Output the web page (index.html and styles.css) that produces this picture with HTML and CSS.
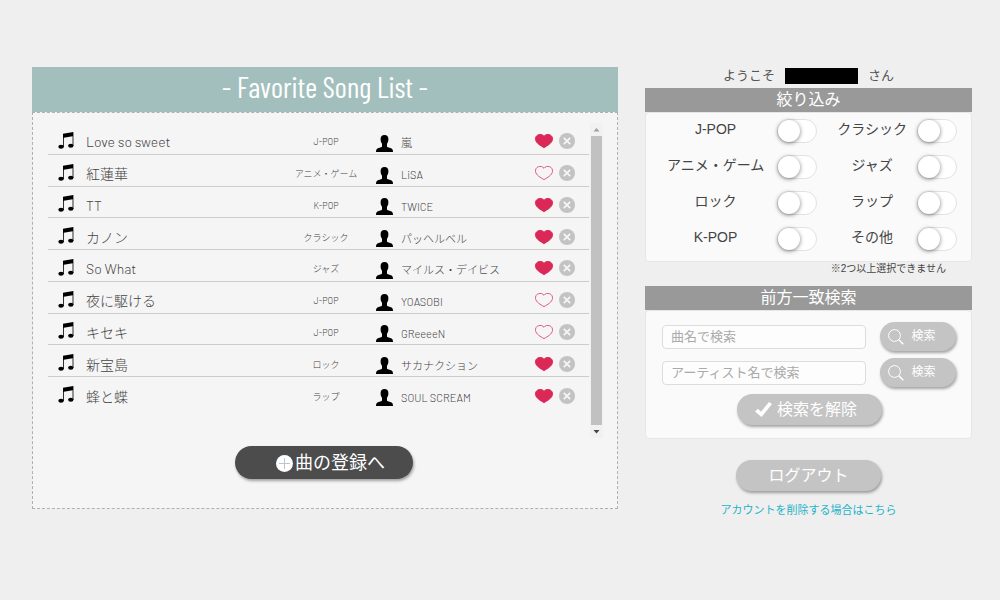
FILE: index.html
```html
<!DOCTYPE html>
<html lang="ja">
<head>
<meta charset="utf-8">
<title>Favorite Song List</title>
<link rel="stylesheet" href="styles.css">
</head>
<body>
<svg class="defs" aria-hidden="true">
  <symbol id="note" viewBox="0 0 16 17"><path d="M5 1.800 15.400 0v14h-.8V4.300L5.800 5.800v9.500H5z"/><ellipse cx="3" cy="14.800" rx="2.700" ry="2"/><ellipse cx="12.800" cy="13.800" rx="2.700" ry="2"/></symbol>
  <symbol id="person" viewBox="0 0 17 17"><path d="M8.500 0C5.700 0 4.400 1.900 4.600 4.700c.1 1.500.5 2.900 1.400 4v2.500c0 .6-.4.9-1 1.100L2 13.300C.6 13.800 0 14.700 0 17h17c0-2.300-.6-3.200-2-3.700l-3-1c-.6-.2-1-.5-1-1.100V8.700c.9-1.100 1.300-2.500 1.400-4C12.600 1.900 11.300 0 8.500 0z"/></symbol>
  <symbol id="heart" viewBox="0 0 18 14"><path d="M9 2.300C7.600.3 5.300.1 3.500.7 1.300 1.400.3 3.400.5 5.500c.4 3.500 5.300 6.400 8.500 8.100 3.200-1.700 8.100-4.600 8.500-8.100.2-2.100-.8-4.100-3-4.800C12.700.1 10.400.3 9 2.300z"/></symbol>
  <symbol id="cross" viewBox="0 0 16 16"><circle cx="8" cy="8" r="8" fill="#c3c3c3"/><path d="m4.800 4.800 6.400 6.400m0-6.400-6.400 6.400" stroke="#f7f7f7" stroke-width="1.700"/></symbol>
  <symbol id="lens" viewBox="0 0 16 16"><circle cx="6.500" cy="6.500" r="5.900" fill="none" stroke="#fff"/><path d="m10.800 10.800 4.500 4.500" stroke="#fff" stroke-width="1.500"/></symbol>
</svg>
<div class="page">
  <main class="songs">
    <h1 class="songs-title">- Favorite Song List -</h1>
    <div class="songs-body">
      <div class="list">
        <table class="table">
          <tr><td class="c-note"><svg class="note"><use href="#note"/></svg></td><td class="c-title">Love so sweet</td><td class="c-genre">J-POP</td><td class="c-person"><svg class="person"><use href="#person"/></svg></td><td class="c-artist">嵐</td><td class="c-actions"><button class="icon-btn" aria-label="お気に入り"><svg class="heart on"><use href="#heart"/></svg></button><button class="icon-btn" aria-label="削除"><svg class="cross"><use href="#cross"/></svg></button></td></tr>
          <tr><td class="c-note"><svg class="note"><use href="#note"/></svg></td><td class="c-title">紅蓮華</td><td class="c-genre">アニメ・ゲーム</td><td class="c-person"><svg class="person"><use href="#person"/></svg></td><td class="c-artist">LiSA</td><td class="c-actions"><button class="icon-btn" aria-label="お気に入り"><svg class="heart"><use href="#heart"/></svg></button><button class="icon-btn" aria-label="削除"><svg class="cross"><use href="#cross"/></svg></button></td></tr>
          <tr><td class="c-note"><svg class="note"><use href="#note"/></svg></td><td class="c-title">TT</td><td class="c-genre">K-POP</td><td class="c-person"><svg class="person"><use href="#person"/></svg></td><td class="c-artist">TWICE</td><td class="c-actions"><button class="icon-btn" aria-label="お気に入り"><svg class="heart on"><use href="#heart"/></svg></button><button class="icon-btn" aria-label="削除"><svg class="cross"><use href="#cross"/></svg></button></td></tr>
          <tr><td class="c-note"><svg class="note"><use href="#note"/></svg></td><td class="c-title">カノン</td><td class="c-genre">クラシック</td><td class="c-person"><svg class="person"><use href="#person"/></svg></td><td class="c-artist">パッヘルベル</td><td class="c-actions"><button class="icon-btn" aria-label="お気に入り"><svg class="heart on"><use href="#heart"/></svg></button><button class="icon-btn" aria-label="削除"><svg class="cross"><use href="#cross"/></svg></button></td></tr>
          <tr><td class="c-note"><svg class="note"><use href="#note"/></svg></td><td class="c-title">So What</td><td class="c-genre">ジャズ</td><td class="c-person"><svg class="person"><use href="#person"/></svg></td><td class="c-artist">マイルス・デイビス</td><td class="c-actions"><button class="icon-btn" aria-label="お気に入り"><svg class="heart on"><use href="#heart"/></svg></button><button class="icon-btn" aria-label="削除"><svg class="cross"><use href="#cross"/></svg></button></td></tr>
          <tr><td class="c-note"><svg class="note"><use href="#note"/></svg></td><td class="c-title">夜に駆ける</td><td class="c-genre">J-POP</td><td class="c-person"><svg class="person"><use href="#person"/></svg></td><td class="c-artist">YOASOBI</td><td class="c-actions"><button class="icon-btn" aria-label="お気に入り"><svg class="heart"><use href="#heart"/></svg></button><button class="icon-btn" aria-label="削除"><svg class="cross"><use href="#cross"/></svg></button></td></tr>
          <tr><td class="c-note"><svg class="note"><use href="#note"/></svg></td><td class="c-title">キセキ</td><td class="c-genre">J-POP</td><td class="c-person"><svg class="person"><use href="#person"/></svg></td><td class="c-artist">GReeeeN</td><td class="c-actions"><button class="icon-btn" aria-label="お気に入り"><svg class="heart"><use href="#heart"/></svg></button><button class="icon-btn" aria-label="削除"><svg class="cross"><use href="#cross"/></svg></button></td></tr>
          <tr><td class="c-note"><svg class="note"><use href="#note"/></svg></td><td class="c-title">新宝島</td><td class="c-genre">ロック</td><td class="c-person"><svg class="person"><use href="#person"/></svg></td><td class="c-artist">サカナクション</td><td class="c-actions"><button class="icon-btn" aria-label="お気に入り"><svg class="heart on"><use href="#heart"/></svg></button><button class="icon-btn" aria-label="削除"><svg class="cross"><use href="#cross"/></svg></button></td></tr>
          <tr><td class="c-note"><svg class="note"><use href="#note"/></svg></td><td class="c-title">蜂と蝶</td><td class="c-genre">ラップ</td><td class="c-person"><svg class="person"><use href="#person"/></svg></td><td class="c-artist">SOUL SCREAM</td><td class="c-actions"><button class="icon-btn" aria-label="お気に入り"><svg class="heart on"><use href="#heart"/></svg></button><button class="icon-btn" aria-label="削除"><svg class="cross"><use href="#cross"/></svg></button></td></tr>
        </table>
        <div class="scrollbar" aria-hidden="true">
          <svg class="arrow" viewBox="0 0 13 13"><path d="m3.500 8.500 3-3.500 3 3.500z" fill="#a0a0a0"/></svg>
          <div class="thumb"></div>
          <svg class="arrow" viewBox="0 0 13 13"><path d="m3.500 5 3 3.500L9.500 5z" fill="#444"/></svg>
        </div>
      </div>
      <button class="pill dark"><svg class="plus" viewBox="0 0 17 17"><circle cx="8.500" cy="8.500" r="8.500" fill="#fff"/><path d="M8.500 3v11M3 8.500h11" stroke="#b9c6d0"/></svg>曲の登録へ</button>
    </div>
  </main>
  <aside class="side">
    <p class="welcome"><span>ようこそ</span><span class="user"></span><span>さん</span></p>
    <h2 class="side-title">絞り込み</h2>
    <div class="panel filters">
      <label for="g1">J-POP</label><input class="toggle" type="checkbox" id="g1">
      <label for="g2">クラシック</label><input class="toggle" type="checkbox" id="g2">
      <label for="g3">アニメ・ゲーム</label><input class="toggle" type="checkbox" id="g3">
      <label for="g4">ジャズ</label><input class="toggle" type="checkbox" id="g4">
      <label for="g5">ロック</label><input class="toggle" type="checkbox" id="g5">
      <label for="g6">ラップ</label><input class="toggle" type="checkbox" id="g6">
      <label for="g7">K-POP</label><input class="toggle" type="checkbox" id="g7">
      <label for="g8">その他</label><input class="toggle" type="checkbox" id="g8">
    </div>
    <p class="hint">※2つ以上選択できません</p>
    <h2 class="side-title">前方一致検索</h2>
    <div class="panel search">
      <form class="search-row"><input class="field" type="text" placeholder="曲名で検索" aria-label="曲名で検索"><button class="pill small" type="button"><svg class="lens"><use href="#lens"/></svg>検索</button></form>
      <form class="search-row"><input class="field" type="text" placeholder="アーティスト名で検索" aria-label="アーティスト名で検索"><button class="pill small" type="button"><svg class="lens"><use href="#lens"/></svg>検索</button></form>
      <button class="pill clear"><svg class="check" viewBox="0 0 17 15"><path d="M0 9.500 3 6.800l3 3L14 0l3 2L6.500 15z" fill="#fff"/></svg>検索を解除</button>
    </div>
    <button class="pill logout">ログアウト</button>
    <a class="remove" href="#">アカウントを削除する場合はこちら</a>
  </aside>
</div>
</body>
</html>
```

FILE: styles.css
```css
* { box-sizing: border-box; }

body {
  margin: 0;
  background: #efefef;
  color: #555;
  font-family: "Liberation Sans", "Noto Sans CJK JP", sans-serif;
  font-size: 14px;
}

h1, h2, p { margin: 0; font-weight: 400; }

button { font-family: inherit; cursor: pointer; }

.defs { position: absolute; width: 0; height: 0; }

.page {
  display: grid;
  grid-template-columns: 586fr 327fr;
  gap: 27px;
  align-items: start;
  padding: 67px 28px 24px 32px;
}

/* Song list */
.songs {
  background: #f5f5f5;
}

.songs-title {
  background: #a3bfbd;
  color: #fff;
  font-family: "Barlow Condensed", "Roboto Condensed", Roboto, sans-serif;
  font-size: 29px;
  line-height: 40px;
  padding-bottom: 5px;
  text-align: center;
}

.songs-body {
  display: flex;
  flex-direction: column;
  align-items: center;
  padding: 10px 14px 29px 15px;
  border: 1px dashed #b0b0b0;
}

.list {
  display: flex;
  gap: 1px;
  width: 100%;
}

.table {
  flex: 1;
  align-self: flex-start;
  height: 285px;
  border-collapse: collapse;
  table-layout: fixed;
  color: #444;
  font-family: Barlow, Roboto, "Noto Sans CJK JP", sans-serif;
  font-weight: 300;
}

.table td {
  padding: 8px 0 0;
  line-height: 20px;
  vertical-align: middle;
  white-space: nowrap;
}

.table tr:not(:last-child) td { border-bottom: 1px solid #ccc; }

.table .c-note { width: 38px; padding: 4px 0 0 10px; }
.c-title { font-size: 14px; }
.c-genre { width: 70px; font-size: 9px; text-align: center; }
.table .c-person { width: 40px; padding: 10px 0 0 15px; }
.table .c-artist { width: 134px; padding-top: 10px; font-size: 11px; }
.table .c-actions { width: 54px; padding-top: 3px; }

.table svg { display: block; }
.note { width: 16px; height: 17px; }
.person { width: 17px; height: 17px; }
.heart { width: 18px; height: 14px; fill: none; stroke: #dc5a7c; }
.heart.on { fill: #dc2856; stroke: #dc2856; }
.cross { width: 16px; height: 16px; }

.icon-btn {
  display: inline-block;
  margin-right: 6px;
  padding: 0;
  border: 0;
  background: none;
  vertical-align: middle;
}
.icon-btn:last-child { margin-right: 0; }

.scrollbar {
  display: flex;
  flex-direction: column;
  width: 13px;
  min-height: 315px;
  background: #f1f1f1;
}
.arrow { width: 13px; height: 13px; }
.thumb { flex: 1; margin: 0 1px; background: #c1c1c1; }

/* Buttons */
.pill {
  display: flex;
  align-items: center;
  justify-content: center;
  gap: 5px;
  width: 145px;
  padding: 5px 0;
  border: 0;
  border-radius: 18px;
  background: #c4c4c4;
  box-shadow: 1px 2px 3px rgba(0, 0, 0, .35);
  color: #fff;
  font-size: 16px;
  line-height: 21px;
}
.pill.dark {
  gap: 2px;
  width: 178px;
  margin: 8px 4px 0 0;
  padding: 7px 0 5px 14px;
  background: #4c4c4c;
  font-size: 18px;
}
.pill.small {
  gap: 7px;
  width: 76px;
  padding: 4px 12px 4px 0;
  font-size: 12px;
}
.pill.clear { padding-right: 6px; }
.plus { width: 17px; height: 17px; }
.lens { width: 16px; height: 16px; }
.check { width: 17px; height: 15px; }

/* Side column */
.side {
  display: flex;
  flex-direction: column;
  align-items: center;
}

.welcome {
  display: flex;
  gap: 10px;
  font-size: 13px;
  line-height: 18px;
  padding-bottom: 3px;
}
.user { width: 73px; height: 16px; margin-top: 1px; background: #000; }

.side-title {
  width: 100%;
  background: #999;
  color: #fff;
  font-size: 16px;
  line-height: 24px;
  text-align: center;
}

.panel {
  width: 100%;
  border: 1px solid #e6e6e6;
  border-radius: 4px;
  background: #fafafa;
}

.filters {
  display: grid;
  grid-template-columns: 102fr 40px 79fr 40px;
  column-gap: 10px;
  row-gap: 12px;
  padding: 6px 14px 10px 18px;
  color: #444;
  text-align: center;
}
.filters label { line-height: 20px; white-space: nowrap; }
.filters label:nth-of-type(even) { padding-left: 10px; }

.toggle {
  appearance: none;
  width: 40px;
  height: 24px;
  margin: 0;
  border: 1px solid #e2e2e2;
  border-radius: 12px;
  background: #fff;
}
.toggle::before {
  content: "";
  display: block;
  width: 22px;
  height: 22px;
  border-radius: 50%;
  background: #fff;
  box-shadow: 0 1px 4px rgba(0, 0, 0, .5);
}
.toggle:checked { background: #a3bfbd; }
.toggle:checked::before { margin-left: auto; }

.hint {
  align-self: flex-end;
  padding: 0 26px 10px 0;
  color: #444;
  font-size: 10px;
  line-height: 14px;
}

.search {
  display: flex;
  flex-direction: column;
  align-items: center;
  gap: 7px;
  padding: 11px 15px 13px 16px;
}
.search-row {
  display: flex;
  align-items: center;
  gap: 14px;
  width: 100%;
}
.field {
  flex: 1;
  min-width: 0;
  height: 24px;
  padding: 0 8px;
  border: 1px solid #ddd;
  border-radius: 4px;
  background: #fdfdfd;
  font-family: inherit;
  font-size: 13px;
}
.field::placeholder { color: #aaa; }

.logout { margin-top: 21px; }

.remove {
  margin-top: 10px;
  color: #1eb4c8;
  font-size: 11px;
  line-height: 18px;
  text-decoration: none;
}
```
